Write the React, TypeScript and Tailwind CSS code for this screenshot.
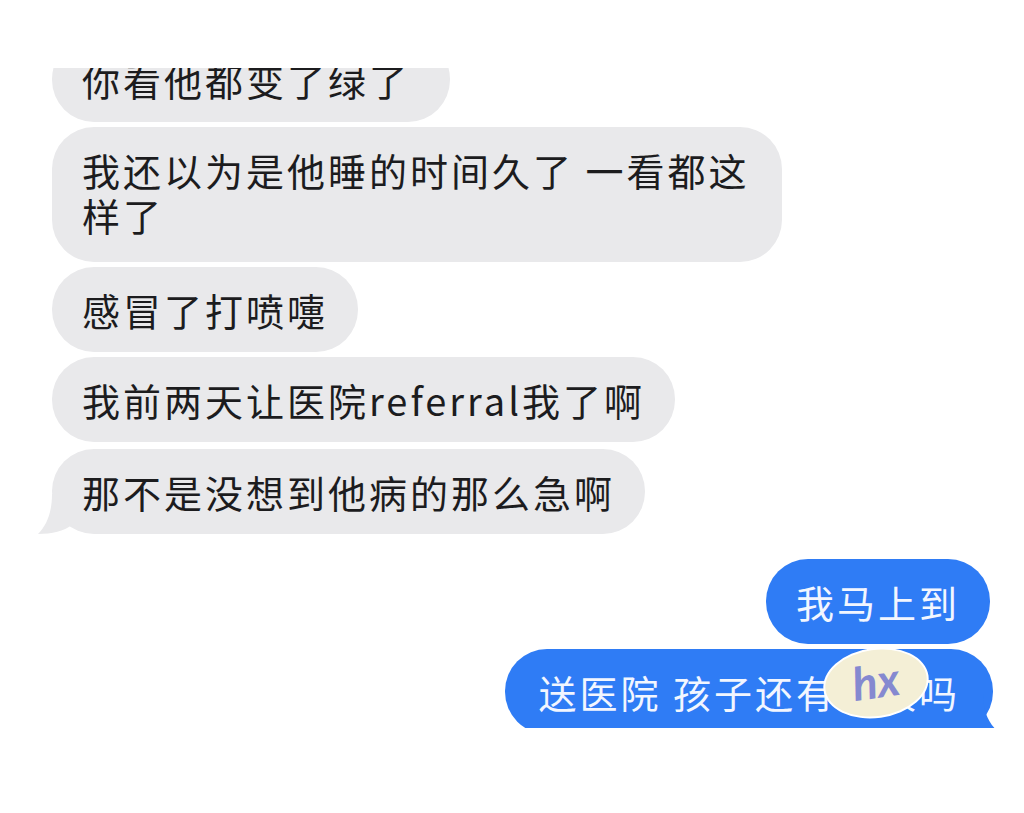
import React from "react";

const grayBubble =
  "relative rounded-[42px] bg-[#e9e9eb] px-[30px] py-[20px] text-[#1c1c1e]";
const blueBubble =
  "relative rounded-[42px] bg-[#2f7cf5] px-[30px] py-[20px] text-[#f2f6ff]";

const incoming = [
  "我还以为是他睡的时间久了 一看都这样了",
  "感冒了打喷嚏",
  "我前两天让医院referral我了啊",
];

export default function App() {
  return (
    <div className="h-[813px] w-[1024px] overflow-hidden bg-white font-['Noto_Sans_CJK_SC','Noto_Sans',sans-serif] text-[38px] leading-[45px] tracking-[3px]">
      <div className="mt-[68px] flex h-[660px] flex-col overflow-hidden">
        <div className="flex flex-col items-start gap-[5px] pl-[52px]">
          <div className={`${grayBubble} -mt-[31px] w-[398px]`}>你看他都变了绿了</div>
          {incoming.map((text, i) => (
            <div
              key={i}
              className={`${grayBubble} max-w-[730px] ${i === 0 ? "pb-[25px]" : ""}`}
            >
              {text}
            </div>
          ))}
          <div className={`${grayBubble} mt-[2px]`}>
            那不是没想到他病的那么急啊
            <svg
              className="absolute -left-[14px] bottom-0"
              width="44"
              height="40"
              viewBox="0 0 44 40"
            >
              <path d="M14 0 C14 18 9 31 0 40 C14 40 26 37 34 31 L44 31 L44 0 Z" fill="#e9e9eb" />
            </svg>
          </div>
        </div>

        <div className="mt-[25px] flex flex-col items-end gap-[5px] pr-[34px]">
          <div className={blueBubble}>我马上到</div>
          <div className={`${blueBubble} -mr-[3px] pl-[33px] pr-[33px]`}>
            送医院 孩子还有呼吸吗
            <svg
              className="absolute -right-[8px] bottom-0"
              width="40"
              height="40"
              viewBox="0 0 40 40"
            >
              <path d="M22 0 C22 18 28 31 40 40 C24 40 12 37 4 31 L0 31 L0 0 Z" fill="#2f7cf5" />
            </svg>
            <div className="absolute left-[320px] top-[1px] flex h-[66px] w-[102px] -rotate-[8deg] items-center justify-center rounded-[50%] bg-[#f4efd6] ring-2 ring-white">
              <span className="-mt-[4px] font-['Lato',sans-serif] text-[46px] font-bold italic leading-none tracking-normal text-[#8589d0]">
                hx
              </span>
            </div>
          </div>
        </div>
      </div>
    </div>
  );
}
